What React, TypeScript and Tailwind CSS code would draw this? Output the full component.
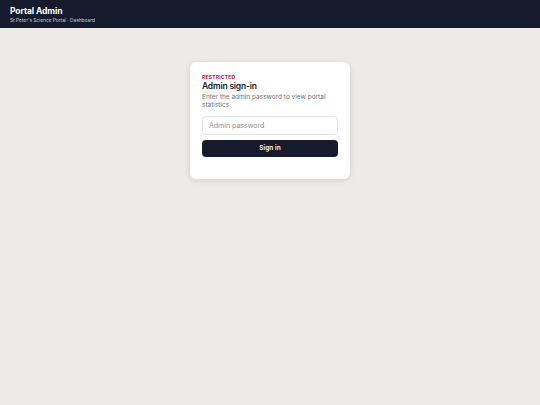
export default function App() {
  return (
    <div
      className="min-h-[405px] bg-[#edebe7] flex flex-col"
      style={{ fontFamily: 'Inter, "Noto Sans", sans-serif' }}
    >
      <header className="h-[28px] bg-[#151b2d] px-[10px] flex flex-col justify-center">
        <div className="text-white text-[8.5px] font-bold leading-[10px] tracking-[-0.1px]">Portal Admin</div>
        <div className="text-[#c9cdd8] text-[4.8px] leading-[6px] mt-[1px]">
          St Peter's Science Portal · Dashboard
        </div>
      </header>

      <main className="flex justify-center pt-[34px]">
        <div className="w-[160px] h-[117px] bg-white rounded-[6px] shadow-[0_1px_6px_rgba(0,0,0,0.12)] px-[12px] pt-[12px] flex flex-col">
          <div className="text-[#c8102e] text-[5px] font-bold tracking-[0.2px] leading-[6px]">RESTRICTED</div>
          <h1 className="text-[#151b2d] text-[8.5px] font-semibold leading-[11px] mt-[1px] tracking-[-0.2px]">
            Admin sign-in
          </h1>
          <p className="text-[#6b7280] text-[6.5px] leading-[8px] mt-[1px] pr-[8px]">
            Enter the admin password to view portal statistics.
          </p>
          <input
            type="password"
            placeholder="Admin password"
            className="block mt-[7px] w-full h-[19px] rounded-[4px] border border-[#e2e2e2] px-[6px] text-[7px] placeholder:text-[#8a8f99] outline-none"
          />
          <button className="block mt-[5px] w-full h-[17px] rounded-[4px] bg-[#151b2d] text-white text-[6.5px] font-semibold">
            Sign in
          </button>
        </div>
      </main>
    </div>
  );
}
